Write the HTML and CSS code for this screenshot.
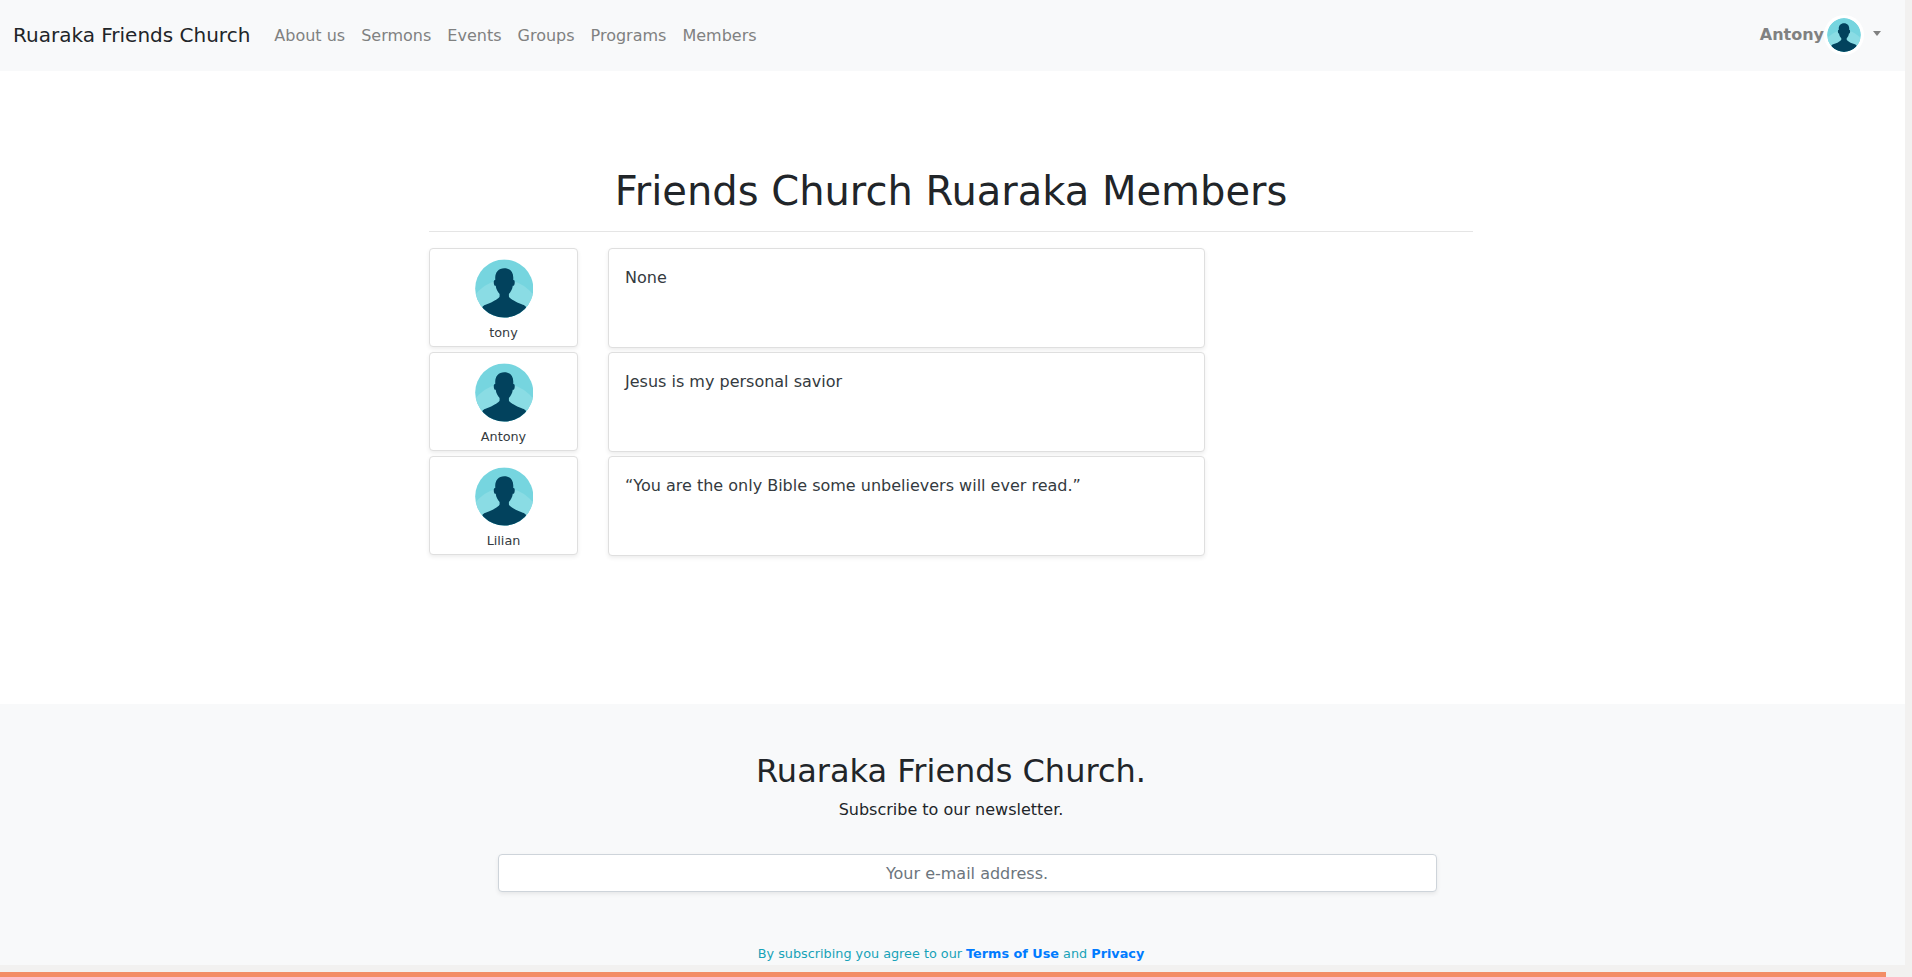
FILE: index.html
```html
<!DOCTYPE html>
<html lang="en">
<head>
<meta charset="utf-8">
<title>Ruaraka Friends Church</title>
<link rel="stylesheet" href="styles.css">
</head>
<body>
<svg class="defs" width="0" height="0" aria-hidden="true">
  <symbol id="avatar" viewBox="0 0 59 59">
    <clipPath id="disc"><circle cx="29.5" cy="29.5" r="29.3"/></clipPath>
    <g clip-path="url(#disc)">
      <rect width="59" height="59" fill="#76d5df"/>
      <circle cx="29.5" cy="57" r="36" fill="#8adce4"/>
      <path fill="#02425d" d="M29.5 9C23.8 9 20.4 13 20.4 18.5V21C18.7 20.8 18.8 23 19.1 25C19.4 26.5 20 27 20.9 26.8C21.3 30.2 22.8 33 24.8 35V37.6C24.4 39.2 19.5 42.3 14.5 44.4C11 45.7 7.6 46.6 7.2 49V60H51.8V49C51.4 46.6 48 45.7 44.5 44.4C39.5 42.3 34.6 39.2 34.2 37.6V35C36.2 33 37.7 30.2 38.1 26.8C39 27 39.6 26.5 39.9 25C40.2 23 40.3 20.8 38.6 21V18.5C38.6 13 35.2 9 29.5 9Z"/>
    </g>
  </symbol>
</svg>
<div class="page">
  <nav class="navbar">
    <a class="brand">Ruaraka Friends Church</a>
    <div class="links">
      <a>About us</a><a>Sermons</a><a>Events</a><a>Groups</a><a>Programs</a><a>Members</a>
    </div>
    <a class="user"><b>Antony</b><svg class="user-pic"><use href="#avatar"/></svg><span class="caret"></span></a>
  </nav>
  <main class="members">
    <h1>Friends Church Ruaraka Members</h1>
    <div class="member">
      <div class="card profile"><svg class="pic"><use href="#avatar"/></svg><small>tony</small></div>
      <div class="card bio">None</div>
    </div>
    <div class="member">
      <div class="card profile"><svg class="pic"><use href="#avatar"/></svg><small>Antony</small></div>
      <div class="card bio">Jesus is my personal savior</div>
    </div>
    <div class="member">
      <div class="card profile"><svg class="pic"><use href="#avatar"/></svg><small>Lilian</small></div>
      <div class="card bio">“You are the only Bible some unbelievers will ever read.”</div>
    </div>
  </main>
  <footer class="footer">
    <h2>Ruaraka Friends Church.</h2>
    <p>Subscribe to our newsletter.</p>
    <input class="email" type="email" placeholder="Your e-mail address.">
    <small class="terms">By subscribing you agree to our <b>Terms of Use</b> and <b>Privacy</b></small>
  </footer>
</div>
<div class="progress"></div>
</body>
</html>
```
FILE: styles.css
```css
* { box-sizing: border-box; }
body {
  margin: 0;
  height: 977px;
  overflow: hidden;
  background: #f2f1f0;
  color: #212529;
  font: 16px/24px "DejaVu Sans", sans-serif;
}
.defs { position: absolute; }
.page {
  width: 1905px;
  height: 965px;
  overflow: hidden;
  background: #fff;
  display: flex;
  flex-direction: column;
}
.navbar {
  flex: none;
  height: 71px;
  display: flex;
  align-items: center;
  padding: 0 24px 0 13px;
  background: #f8f9fa;
}
.brand { font-size: 20px; line-height: 30px; margin: 0 16px 2px 0; }
.links { display: flex; color: #808181; }
.links a { padding: 8px; }
.user { margin-left: auto; display: flex; align-items: center; color: #808181; }
.user b { margin-bottom: 2px; }
.user-pic {
  width: 40px;
  height: 40px;
  padding: 3px;
  margin: 0 0 1px 0;
  border-radius: 50%;
  background: #fff;
}
.caret {
  margin-left: 9px;
  margin-top: -5px;
  border-top: 5px solid #808181;
  border-left: 4.8px solid transparent;
  border-right: 4.8px solid transparent;
}
.members {
  flex: none;
  width: 1044px;
  height: 633px;
  margin-left: 429px;
  padding-top: 96px;
}
h1, h2 { font-weight: 400; text-align: center; }
h1 {
  margin: 0 0 16px;
  padding-bottom: 16px;
  border-bottom: 1px solid #e5e5e5;
  font-size: 40px;
  line-height: 48px;
}
.member { display: flex; align-items: flex-start; gap: 30px; height: 104px; }
.card {
  background: #fff;
  border: 1px solid #dfdfdf;
  border-radius: 4px;
  box-shadow: 0 2px 4px rgba(0, 0, 0, .075);
  color: #343a40;
}
.profile {
  width: 149px;
  height: 99px;
  padding-top: 10px;
  display: flex;
  flex-direction: column;
  align-items: center;
}
.pic { width: 58.5px; height: 59px; margin-left: 1px; }
small { font-size: 12.8px; line-height: 19px; }
.profile small { margin-top: 5px; }
.bio { width: 597px; height: 100px; padding: 17px 16px 16px; }
.footer {
  flex: 1;
  display: flex;
  flex-direction: column;
  align-items: center;
  padding: 48px 3px 0 0;
  background: #f8f9fa;
}
h2 { margin: 0 0 8px; font-size: 32px; line-height: 38.4px; }
.footer p { margin: 0 0 31.6px; }
.email {
  width: 939px;
  height: 38px;
  flex: none;
  margin-left: 32px;
  padding: 6px 12px;
  border: 1px solid #ced4da;
  border-radius: 4px;
  box-shadow: 0 2px 4px rgba(0, 0, 0, .075);
  background: #fff;
  font: inherit;
  text-align: center;
}
.email::placeholder { color: #6c757d; opacity: 1; }
.terms { margin-top: 52px; color: #17a2b8; }
.terms b { color: #007bff; }
.progress { width: 1886px; height: 5px; margin-top: 7px; background: #f38d66; }
```
